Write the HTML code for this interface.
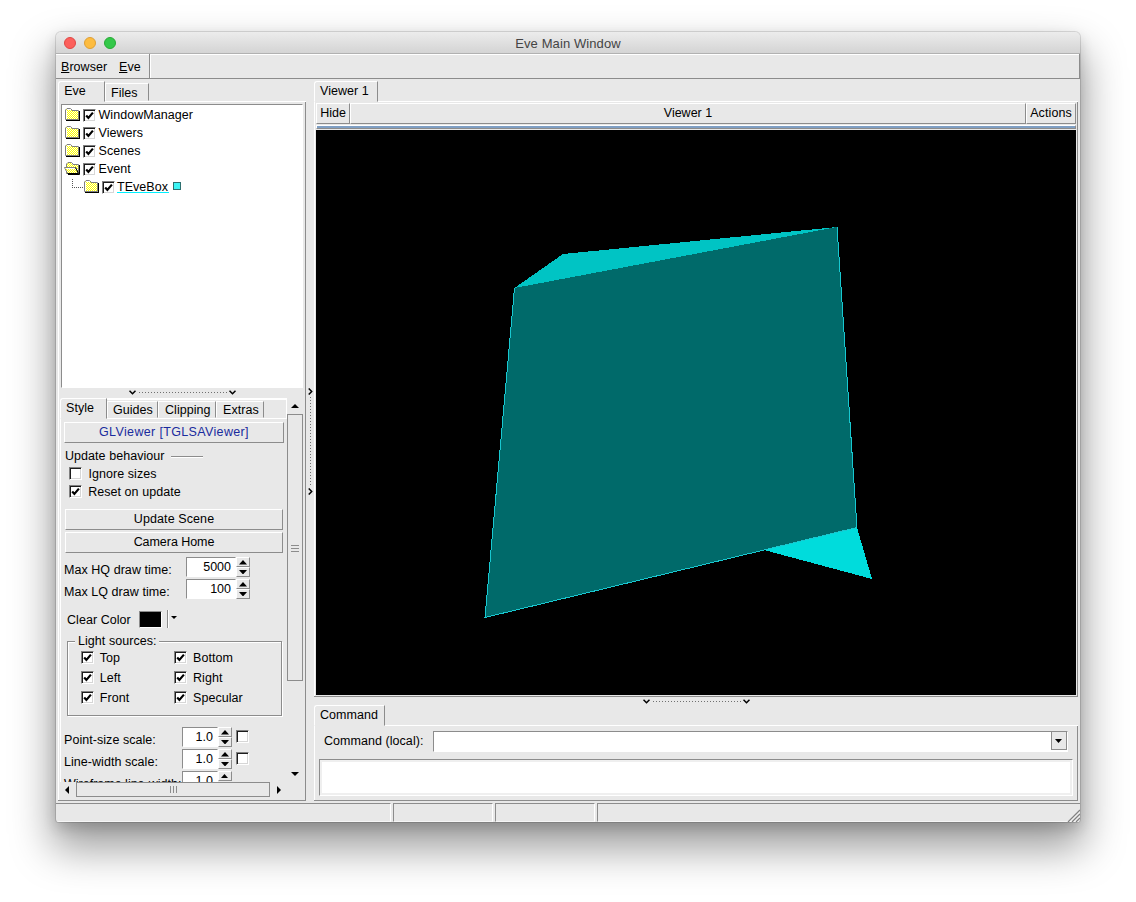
<!DOCTYPE html>
<html><head><meta charset="utf-8"><title>Eve Main Window</title>
<style>
*{box-sizing:border-box;margin:0;padding:0}
html,body{width:1136px;height:902px;background:#fff;overflow:hidden}
body{font-family:"Liberation Sans",sans-serif;font-size:12.5px;color:#000;position:relative}
#win div,#win svg,#win span{position:absolute}
#win{position:absolute;overflow:hidden;left:56px;top:32px;width:1024px;height:790px;background:#e8e8e8;border-radius:5px 5px 3px 3px;
 box-shadow:0 0 0 1px rgba(0,0,0,.12),0 23px 42px 4px rgba(0,0,0,.38),0 6px 14px rgba(0,0,0,.16)}
#title{left:0;top:0;width:1024px;height:22px;border-radius:5px 5px 0 0;background:linear-gradient(#ececec,#d4d4d4);border-bottom:1px solid #b1b1b1}
#title span{left:0;width:1024px;top:4.5px;text-align:center;font-size:13px;color:#444;letter-spacing:.1px}
.tl{width:12px;height:12px;border-radius:50%;top:5px}
.t{white-space:nowrap;line-height:14px;letter-spacing:.05px}
.raised{border:1px solid;border-color:#fff #8c8c8c #8c8c8c #fff;background:#e8e8e8}
.sunk{border:1px solid;border-color:#8c8c8c #fff #fff #8c8c8c}
.cb{width:13px;height:13px;background:#fff;border:1px solid;border-color:#808080 #fff #fff #808080;box-shadow:inset 1px 1px 0 #1c1c1c,inset -1px -1px 0 #d6d6d6}
u{text-decoration-thickness:1px;text-underline-offset:1px}
</style></head><body>
<div id="win">
 <svg width="0" height="0" style="left:0;top:0"><defs><pattern id="dth" width="2" height="2" patternUnits="userSpaceOnUse"><rect width="2" height="2" fill="#ffffec"/><rect width="1" height="1" fill="#ffff00"/><rect x="1" y="1" width="1" height="1" fill="#ffff00"/></pattern></defs></svg>
 <div id="title"><span class="t">Eve Main Window</span>
  <div class="tl" style="left:8px;background:#fc605c;border:.5px solid #df4744"></div>
  <div class="tl" style="left:28px;background:#fdbc40;border:.5px solid #de9f34"></div>
  <div class="tl" style="left:48px;background:#34c84a;border:.5px solid #27aa35"></div>
 </div>
<div style="left:0px;top:22px;width:1024px;height:1px;background:#fff;"></div>
<div style="left:0px;top:46px;width:1024px;height:1px;background:#8c8c8c;"></div>
<div style="left:93px;top:22px;width:1px;height:24px;background:#8c8c8c;"></div>
<div style="left:94px;top:22px;width:1px;height:24px;background:#fff;"></div>
<div style="left:1023px;top:22px;width:1px;height:24px;background:#8c8c8c;"></div>
<div class="t" style="left:5px;top:28px;"><u>B</u>rowser</div>
<div class="t" style="left:63px;top:28px;"><u>E</u>ve</div>
<div style="left:2px;top:69px;width:248px;height:1px;background:#fff;"></div>
<div style="left:2px;top:69px;width:1px;height:699px;background:#fff;"></div>
<div style="left:249px;top:70px;width:1px;height:699px;background:#8c8c8c;"></div>
<div style="left:2px;top:768px;width:248px;height:1px;background:#8c8c8c;"></div>
<div style="left:2px;top:49px;width:47px;height:21px;background:#e8e8e8;border:1px solid;border-color:#fff #8c8c8c #e8e8e8 #fff;border-radius:3px 0 0 0"></div>
<div class="t" style="left:8.2px;top:52px;">Eve</div>
<div style="left:49px;top:51px;width:44px;height:18px;border:1px solid;border-color:#fff #8c8c8c transparent #fff"></div>
<div class="t" style="left:55px;top:54px;">Files</div>
<div class="sunk" style="left:5px;top:72px;width:242px;height:284px;background:#fff"></div>
<svg style="left:9px;top:76px" width="15" height="13" viewBox="0 0 15 13" shape-rendering="crispEdges"><rect x="14" y="3" width="1" height="10" fill="#000"/><rect x="1" y="12" width="14" height="1" fill="#000"/><path d="M0.5 11.5V2L2 0.5H5.5L7 2V2.5H13.5V11.5Z" fill="url(#dth)" stroke="#808080" stroke-width="1" shape-rendering="auto"/><path d="M1.5 11V2.5M2 1.5H6" stroke="#fff" stroke-width="1" fill="none"/></svg>
<div class="cb" style="left:27px;top:77px"><svg style="left:1px;top:1px" width="9" height="9" viewBox="0 0 9 9"><path d="M1.2 4.4L3.4 6.9L7.9 1.6" stroke="#000" stroke-width="2.2" fill="none" stroke-linejoin="miter"/></svg></div>
<div class="t" style="left:42.5px;top:75.5px;">WindowManager</div>
<svg style="left:9px;top:94px" width="15" height="13" viewBox="0 0 15 13" shape-rendering="crispEdges"><rect x="14" y="3" width="1" height="10" fill="#000"/><rect x="1" y="12" width="14" height="1" fill="#000"/><path d="M0.5 11.5V2L2 0.5H5.5L7 2V2.5H13.5V11.5Z" fill="url(#dth)" stroke="#808080" stroke-width="1" shape-rendering="auto"/><path d="M1.5 11V2.5M2 1.5H6" stroke="#fff" stroke-width="1" fill="none"/></svg>
<div class="cb" style="left:27px;top:95px"><svg style="left:1px;top:1px" width="9" height="9" viewBox="0 0 9 9"><path d="M1.2 4.4L3.4 6.9L7.9 1.6" stroke="#000" stroke-width="2.2" fill="none" stroke-linejoin="miter"/></svg></div>
<div class="t" style="left:42.5px;top:93.5px;">Viewers</div>
<svg style="left:9px;top:112px" width="15" height="13" viewBox="0 0 15 13" shape-rendering="crispEdges"><rect x="14" y="3" width="1" height="10" fill="#000"/><rect x="1" y="12" width="14" height="1" fill="#000"/><path d="M0.5 11.5V2L2 0.5H5.5L7 2V2.5H13.5V11.5Z" fill="url(#dth)" stroke="#808080" stroke-width="1" shape-rendering="auto"/><path d="M1.5 11V2.5M2 1.5H6" stroke="#fff" stroke-width="1" fill="none"/></svg>
<div class="cb" style="left:27px;top:113px"><svg style="left:1px;top:1px" width="9" height="9" viewBox="0 0 9 9"><path d="M1.2 4.4L3.4 6.9L7.9 1.6" stroke="#000" stroke-width="2.2" fill="none" stroke-linejoin="miter"/></svg></div>
<div class="t" style="left:42.5px;top:111.5px;">Scenes</div>
<svg style="left:8px;top:130px" width="16" height="13" viewBox="-1 0 16 13"><path d="M14.5 3V12.5H3" stroke="#000" fill="none"/><path d="M1.5 11.5V2L3 0.5H6.5L8 2V2.5H13.5V11.5Z" fill="url(#dth)" stroke="#808080"/><path d="M-0.5 5.5H10.5L13.5 11.5H2.5Z" fill="url(#dth)" stroke="#808080"/><path d="M0.5 6.5H10" stroke="#fff" fill="none"/><path d="M10.5 5.5L13.5 11.5H2.5" stroke="#000" fill="none"/></svg>
<div class="cb" style="left:27px;top:131px"><svg style="left:1px;top:1px" width="9" height="9" viewBox="0 0 9 9"><path d="M1.2 4.4L3.4 6.9L7.9 1.6" stroke="#000" stroke-width="2.2" fill="none" stroke-linejoin="miter"/></svg></div>
<div class="t" style="left:42.5px;top:129.5px;">Event</div>
<svg style="left:16px;top:146.5px" width="12" height="10" viewBox="0 0 12 10" shape-rendering="crispEdges"><path d="M0.5 0V9M0 8.5H12" stroke="#555" stroke-dasharray="1 1" fill="none"/></svg>
<svg style="left:28px;top:148px" width="15" height="13" viewBox="0 0 15 13" shape-rendering="crispEdges"><rect x="14" y="3" width="1" height="10" fill="#000"/><rect x="1" y="12" width="14" height="1" fill="#000"/><path d="M0.5 11.5V2L2 0.5H5.5L7 2V2.5H13.5V11.5Z" fill="url(#dth)" stroke="#808080" stroke-width="1" shape-rendering="auto"/><path d="M1.5 11V2.5M2 1.5H6" stroke="#fff" stroke-width="1" fill="none"/></svg>
<div class="cb" style="left:46px;top:149px"><svg style="left:1px;top:1px" width="9" height="9" viewBox="0 0 9 9"><path d="M1.2 4.4L3.4 6.9L7.9 1.6" stroke="#000" stroke-width="2.2" fill="none" stroke-linejoin="miter"/></svg></div>
<div class="t" style="left:61px;top:147.5px;">TEveBox</div>
<div style="left:61px;top:160px;width:52px;height:1px;background:#00f0ff;"></div>
<div style="left:117px;top:150px;width:8px;height:8px;background:#3cf4f4;border:1px solid #2d6f6f"></div>
<svg style="left:73.0px;top:358px" width="7" height="5" viewBox="0 0 7 5"><path d="M0.5 0.7L3.5 3.7L6.5 0.7" stroke="#000" stroke-width="1.5" fill="none"/></svg>
<svg style="left:173.0px;top:358px" width="7" height="5" viewBox="0 0 7 5"><path d="M0.5 0.7L3.5 3.7L6.5 0.7" stroke="#000" stroke-width="1.5" fill="none"/></svg>
<div style="left:83px;top:360px;width:90px;height:1px;background:repeating-linear-gradient(90deg,#707070 0 1px,transparent 1px 3px)"></div>
<div style="left:4px;top:386px;width:227px;height:1px;background:#fff;"></div>
<div style="left:4px;top:387px;width:1px;height:363px;background:#fff;"></div>
<div style="left:51px;top:366px;width:180px;height:2px;background:#fff;"></div>
<div style="left:230px;top:366px;width:1px;height:21px;background:#fff;"></div>
<div style="left:4px;top:366px;width:47px;height:21px;background:#e8e8e8;border:1px solid;border-color:#fff #8c8c8c #e8e8e8 #fff;border-radius:3px 0 0 0"></div>
<div class="t" style="left:10px;top:369px;">Style</div>
<div style="left:51px;top:369px;width:51px;height:17px;border:1px solid;border-color:#fff #8c8c8c transparent #fff"></div>
<div class="t" style="left:57px;top:371px;">Guides</div>
<div style="left:102px;top:369px;width:58px;height:17px;border:1px solid;border-color:#fff #8c8c8c transparent #fff"></div>
<div class="t" style="left:109px;top:371px;">Clipping</div>
<div style="left:160px;top:369px;width:48px;height:17px;border:1px solid;border-color:#fff #8c8c8c transparent #fff"></div>
<div class="t" style="left:167px;top:371px;">Extras</div>
<div class="raised" style="left:8px;top:390px;width:220px;height:21px"><div class="t" style="left:0;width:218px;top:1.5px;text-align:center;letter-spacing:0.35px;color:#1a2c9e">GLViewer [TGLSAViewer]</div></div>
<div class="t" style="left:9px;top:417px;">Update behaviour</div>
<div style="left:115px;top:424px;width:32px;height:1px;background:#8c8c8c;"></div>
<div style="left:115px;top:425px;width:32px;height:1px;background:#fff;"></div>
<div class="cb" style="left:13px;top:435px"></div>
<div class="t" style="left:32.5px;top:434.5px;">Ignore sizes</div>
<div class="cb" style="left:13px;top:453px"><svg style="left:1px;top:1px" width="9" height="9" viewBox="0 0 9 9"><path d="M1.2 4.4L3.4 6.9L7.9 1.6" stroke="#000" stroke-width="2.2" fill="none" stroke-linejoin="miter"/></svg></div>
<div class="t" style="left:32.2px;top:453px;">Reset on update</div>
<div class="raised" style="left:9px;top:477px;width:218px;height:21px"><div class="t" style="left:0;width:216px;top:1.5px;text-align:center;letter-spacing:0.1px;">Update Scene</div></div>
<div class="raised" style="left:9px;top:500px;width:218px;height:21px"><div class="t" style="left:0;width:216px;top:1.5px;text-align:center;letter-spacing:-0.05px;">Camera Home</div></div>
<div class="t" style="left:8px;top:531px;">Max HQ draw time:</div>
<div class="t" style="left:8px;top:553px;">Max LQ draw time:</div>
<div class="sunk" style="left:130px;top:525px;width:50px;height:20px;background:#fff"></div>
<div class="t" style="left:130px;top:528px;width:45px;text-align:right;letter-spacing:0">5000</div>
<div class="raised" style="left:180px;top:525px;width:14px;height:10px;"></div>
<div class="raised" style="left:180px;top:535px;width:14px;height:10px;"></div>
<svg style="left:182.5px;top:528.05px" width="8" height="4.5" viewBox="0 0 8 4.5"><path d="M0 4.5L4.0 0L8 4.5Z" fill="#000"/></svg>
<svg style="left:182.5px;top:537.75px" width="8" height="4.5" viewBox="0 0 8 4.5"><path d="M0 0L4.0 4.5L8 0Z" fill="#000"/></svg>
<div class="sunk" style="left:130px;top:547px;width:50px;height:20px;background:#fff"></div>
<div class="t" style="left:130px;top:550px;width:45px;text-align:right;letter-spacing:0">100</div>
<div class="raised" style="left:180px;top:547px;width:14px;height:10px;"></div>
<div class="raised" style="left:180px;top:557px;width:14px;height:10px;"></div>
<svg style="left:182.5px;top:550.05px" width="8" height="4.5" viewBox="0 0 8 4.5"><path d="M0 4.5L4.0 0L8 4.5Z" fill="#000"/></svg>
<svg style="left:182.5px;top:559.75px" width="8" height="4.5" viewBox="0 0 8 4.5"><path d="M0 0L4.0 4.5L8 0Z" fill="#000"/></svg>
<div class="t" style="left:11px;top:581px;">Clear Color</div>
<div style="left:83px;top:579px;width:23px;height:17px;background:#000;border:1px solid;border-color:#8c8c8c #fff #fff #8c8c8c"></div>
<div style="left:111px;top:578px;width:1px;height:18px;background:#8c8c8c;"></div>
<div style="left:112px;top:578px;width:1px;height:18px;background:#fff;"></div>
<svg style="left:114.5px;top:583.5px" width="6" height="3" viewBox="0 0 6 3"><path d="M0 0L3.0 3L6 0Z" fill="#000"/></svg>
<div style="left:11px;top:609px;width:215px;height:75px;border:1px solid #8c8c8c;box-shadow:inset 1px 1px 0 #fff,1px 1px 0 #fff"></div>
<div style="left:19px;top:604px;width:84px;height:12px;background:#e8e8e8;"></div>
<div class="t" style="left:22px;top:602px;">Light sources:</div>
<div class="cb" style="left:25px;top:619.0px"><svg style="left:1px;top:1px" width="9" height="9" viewBox="0 0 9 9"><path d="M1.2 4.4L3.4 6.9L7.9 1.6" stroke="#000" stroke-width="2.2" fill="none" stroke-linejoin="miter"/></svg></div>
<div class="t" style="left:43.8px;top:618.7px;">Top</div>
<div class="cb" style="left:118px;top:619.0px"><svg style="left:1px;top:1px" width="9" height="9" viewBox="0 0 9 9"><path d="M1.2 4.4L3.4 6.9L7.9 1.6" stroke="#000" stroke-width="2.2" fill="none" stroke-linejoin="miter"/></svg></div>
<div class="t" style="left:137px;top:618.7px;">Bottom</div>
<div class="cb" style="left:25px;top:639.0px"><svg style="left:1px;top:1px" width="9" height="9" viewBox="0 0 9 9"><path d="M1.2 4.4L3.4 6.9L7.9 1.6" stroke="#000" stroke-width="2.2" fill="none" stroke-linejoin="miter"/></svg></div>
<div class="t" style="left:43.8px;top:638.7px;">Left</div>
<div class="cb" style="left:118px;top:639.0px"><svg style="left:1px;top:1px" width="9" height="9" viewBox="0 0 9 9"><path d="M1.2 4.4L3.4 6.9L7.9 1.6" stroke="#000" stroke-width="2.2" fill="none" stroke-linejoin="miter"/></svg></div>
<div class="t" style="left:137px;top:638.7px;">Right</div>
<div class="cb" style="left:25px;top:659.0px"><svg style="left:1px;top:1px" width="9" height="9" viewBox="0 0 9 9"><path d="M1.2 4.4L3.4 6.9L7.9 1.6" stroke="#000" stroke-width="2.2" fill="none" stroke-linejoin="miter"/></svg></div>
<div class="t" style="left:43.8px;top:658.7px;">Front</div>
<div class="cb" style="left:118px;top:659.0px"><svg style="left:1px;top:1px" width="9" height="9" viewBox="0 0 9 9"><path d="M1.2 4.4L3.4 6.9L7.9 1.6" stroke="#000" stroke-width="2.2" fill="none" stroke-linejoin="miter"/></svg></div>
<div class="t" style="left:137px;top:658.7px;">Specular</div>
<div class="t" style="left:8px;top:700.5px;">Point-size scale:</div>
<div class="t" style="left:8px;top:722.5px;">Line-width scale:</div>
<div class="sunk" style="left:126px;top:695px;width:36px;height:20px;background:#fff"></div>
<div class="t" style="left:126px;top:698px;width:31px;text-align:right;letter-spacing:0">1.0</div>
<div class="raised" style="left:162px;top:695px;width:14px;height:10px;"></div>
<div class="raised" style="left:162px;top:705px;width:14px;height:10px;"></div>
<svg style="left:164.5px;top:698.05px" width="8" height="4.5" viewBox="0 0 8 4.5"><path d="M0 4.5L4.0 0L8 4.5Z" fill="#000"/></svg>
<svg style="left:164.5px;top:707.75px" width="8" height="4.5" viewBox="0 0 8 4.5"><path d="M0 0L4.0 4.5L8 0Z" fill="#000"/></svg>
<div class="sunk" style="left:126px;top:717px;width:36px;height:20px;background:#fff"></div>
<div class="t" style="left:126px;top:720px;width:31px;text-align:right;letter-spacing:0">1.0</div>
<div class="raised" style="left:162px;top:717px;width:14px;height:10px;"></div>
<div class="raised" style="left:162px;top:727px;width:14px;height:10px;"></div>
<svg style="left:164.5px;top:720.05px" width="8" height="4.5" viewBox="0 0 8 4.5"><path d="M0 4.5L4.0 0L8 4.5Z" fill="#000"/></svg>
<svg style="left:164.5px;top:729.75px" width="8" height="4.5" viewBox="0 0 8 4.5"><path d="M0 0L4.0 4.5L8 0Z" fill="#000"/></svg>
<div class="cb" style="left:180px;top:698px"></div>
<div class="cb" style="left:180px;top:720px"></div>
<div style="left:4px;top:739px;width:226px;height:11px;overflow:hidden"><div class="t" style="left:4px;top:5.5px;letter-spacing:0">Wireframe line-width:</div><div class="sunk" style="left:122px;top:0;width:36px;height:20px;background:#fff"></div><div class="t" style="left:122px;top:3px;width:31px;text-align:right;letter-spacing:0">1.0</div><div class="raised" style="left:158px;top:0;width:14px;height:10px"></div><svg style="left:161px;top:3px" width="7" height="4" viewBox="0 0 7 4"><path d="M0 4L3.5 0L7 4Z"/></svg></div>
<svg style="left:234.5px;top:371.5px" width="8" height="4" viewBox="0 0 8 4"><path d="M0 4L4.0 0L8 4Z" fill="#000"/></svg>
<svg style="left:234.5px;top:740.0px" width="8" height="4" viewBox="0 0 8 4"><path d="M0 0L4.0 4L8 0Z" fill="#000"/></svg>
<div style="left:231px;top:382px;width:16px;height:267px;border:1px solid;border-color:#8c8c8c;background:#e8e8e8"></div>
<div style="left:235px;top:513px;width:8px;height:1px;background:#8c8c8c;"></div>
<div style="left:235px;top:516px;width:8px;height:1px;background:#8c8c8c;"></div>
<div style="left:235px;top:519px;width:8px;height:1px;background:#8c8c8c;"></div>
<svg style="left:9.0px;top:753.5px" width="4" height="8" viewBox="0 0 4 8"><path d="M4 0L0 4.0L4 8Z" fill="#000"/></svg>
<svg style="left:220.5px;top:753.5px" width="4" height="8" viewBox="0 0 4 8"><path d="M0 0L4 4.0L0 8Z" fill="#000"/></svg>
<div style="left:20px;top:750px;width:194px;height:15px;border:1px solid;border-color:#8c8c8c;background:#e8e8e8"></div>
<div style="left:114px;top:754px;width:1px;height:7px;background:#8c8c8c;"></div>
<div style="left:117px;top:754px;width:1px;height:7px;background:#8c8c8c;"></div>
<div style="left:120px;top:754px;width:1px;height:7px;background:#8c8c8c;"></div>
<svg style="left:251.5px;top:355.5px" width="5" height="7" viewBox="0 0 5 7"><path d="M0.7 0.5L3.7 3.5L0.7 6.5" stroke="#000" stroke-width="1.5" fill="none"/></svg>
<svg style="left:251.5px;top:455.5px" width="5" height="7" viewBox="0 0 5 7"><path d="M0.7 0.5L3.7 3.5L0.7 6.5" stroke="#000" stroke-width="1.5" fill="none"/></svg>
<div style="left:254px;top:365px;width:1px;height:88px;background:repeating-linear-gradient(180deg,#707070 0 1px,transparent 1px 3px)"></div>
<div style="left:322px;top:69px;width:700px;height:1px;background:#fff;"></div>
<div style="left:258px;top:69px;width:1px;height:596px;background:#fff;"></div>
<div style="left:1021px;top:70px;width:1px;height:595px;background:#8c8c8c;"></div>
<div style="left:258px;top:664px;width:764px;height:1px;background:#8c8c8c;"></div>
<div style="left:1021px;top:693px;width:1px;height:76px;background:#8c8c8c;"></div>
<div style="left:258px;top:768px;width:764px;height:1px;background:#8c8c8c;"></div>
<div style="left:258px;top:49px;width:64px;height:21px;background:#e8e8e8;border:1px solid;border-color:#fff #8c8c8c #e8e8e8 #fff;border-radius:3px 0 0 0"></div>
<div class="t" style="left:264px;top:52px;">Viewer 1</div>
<div class="raised" style="left:260px;top:71px;width:34px;height:21px"><div class="t" style="left:0;width:32px;top:1.5px;text-align:center;letter-spacing:0px;">Hide</div></div>
<div class="raised" style="left:294px;top:71px;width:676px;height:21px"><div class="t" style="left:0;width:674px;top:1.5px;text-align:center;letter-spacing:0px;">Viewer 1</div></div>
<div class="raised" style="left:970px;top:71px;width:50px;height:21px"><div class="t" style="left:0;width:48px;top:1.5px;text-align:center;letter-spacing:0.1px;">Actions</div></div>
<div style="left:260px;top:93px;width:760px;height:4px;background:#7f9fc4;border:1px solid;border-color:#fff #8c8c8c #8c8c8c #fff"></div>
<div style="left:260px;top:98px;width:760px;height:565px;background:#000;"></div>
<svg style="left:260px;top:97px" width="761" height="566" viewBox="316 129 761 566" shape-rendering="crispEdges"><polygon points="514.5,288 563,254 837,227" fill="#00c4c4"/><polygon points="764,550 857,527.5 872,579" fill="#00dcdc"/><polygon points="514.5,288 837,227 857,527.5 485,617.5" fill="#006a6a"/><polyline points="514.5,288 485,617.5 857,527.5 837,227" fill="none" stroke="#18c8d0" stroke-width="1"/></svg>
<svg style="left:587.0px;top:666.6px" width="7" height="5" viewBox="0 0 7 5"><path d="M0.5 0.7L3.5 3.7L6.5 0.7" stroke="#000" stroke-width="1.5" fill="none"/></svg>
<svg style="left:687.0px;top:666.6px" width="7" height="5" viewBox="0 0 7 5"><path d="M0.5 0.7L3.5 3.7L6.5 0.7" stroke="#000" stroke-width="1.5" fill="none"/></svg>
<div style="left:597px;top:669px;width:90px;height:1px;background:repeating-linear-gradient(90deg,#707070 0 1px,transparent 1px 3px)"></div>
<div style="left:328px;top:693px;width:694px;height:1px;background:#fff;"></div>
<div style="left:258px;top:693px;width:1px;height:75px;background:#fff;"></div>
<div style="left:258px;top:673px;width:71px;height:21px;background:#e8e8e8;border:1px solid;border-color:#fff #8c8c8c #e8e8e8 #fff;border-radius:3px 0 0 0"></div>
<div class="t" style="left:264px;top:675.5px;">Command</div>
<div class="t" style="left:268px;top:701.5px;">Command (local):</div>
<div class="sunk" style="left:377px;top:699px;width:635px;height:21px;background:#fff"></div>
<div style="left:995px;top:699px;width:16px;height:19px;background:#e8e8e8;border:1px solid #8c8c8c"></div>
<svg style="left:999.2px;top:707.2px" width="7" height="4" viewBox="0 0 7 4"><path d="M0 0L3.5 4L7 0Z" fill="#000"/></svg>
<div class="sunk" style="left:263px;top:727px;width:754px;height:37px;background:#fff;box-shadow:inset 0 0 0 2px #efefef"></div>
<div class="sunk" style="left:-1px;top:771px;width:336px;height:19px;border-bottom-color:#f6f6f6"></div>
<div class="sunk" style="left:337px;top:771px;width:100px;height:19px;border-bottom-color:#f6f6f6"></div>
<div class="sunk" style="left:439px;top:771px;width:100px;height:19px;border-bottom-color:#f6f6f6"></div>
<div class="sunk" style="left:541px;top:771px;width:484px;height:19px;border-bottom-color:#f6f6f6"></div>
<svg style="left:1010px;top:776px" width="14" height="14" viewBox="0 0 14 14"><path d="M14 3L3 14M14 7L7 14M14 11L11 14" stroke="#fff" stroke-width="1.2"/><path d="M14 2L2 14M14 6L6 14M14 10L10 14" stroke="#808080" stroke-width="1.3"/></svg>
</div>
</body></html>
